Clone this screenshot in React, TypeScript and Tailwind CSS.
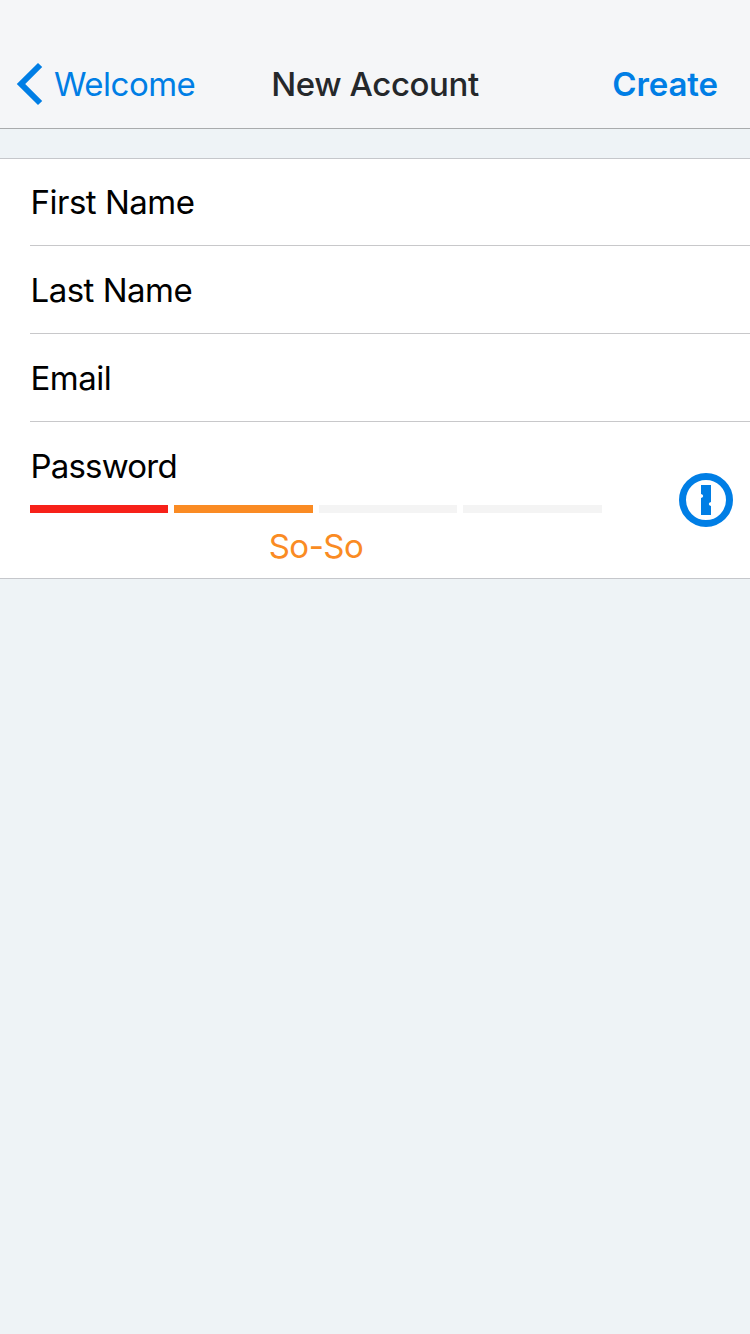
export default function App() {
  const fields = ['First Name', 'Last Name', 'Email'];
  return (
    <div className="h-[1334px] w-[750px] overflow-hidden bg-[#eef3f6] font-['Inter',sans-serif] text-[33px] leading-[44px] tracking-[-0.5px] text-black">
      <header className="grid h-[129px] grid-cols-[1fr_auto_1fr] items-end border-b border-[#a9abad] bg-[#f5f6f8] pb-[22px]">
        <div className="flex items-center pl-4 text-[#007ee5]">
          <svg className="h-[42px] w-[27px]" viewBox="0 0 27 42" fill="currentColor"><path d="M.8 21 22 0l4.2 4.1L9.2 21l17 16.9L22 42z" /></svg>
          <span className="ml-[11px]">Welcome</span>
        </div>
        <h1 className="font-medium tracking-[-0.4px] text-[#25282b]">New Account</h1>
        <div className="pr-8 text-right font-semibold tracking-[-0.1px] text-[#007ee5]">Create</div>
      </header>
      <main className="mt-[29px] border-y border-[#c5c7cb] bg-white pl-[30px]">
        {fields.map((f) => (
          <div key={f} className="h-[88px] border-b border-[#c8c8ca] pl-[0.5px] pt-[22px] first:h-[87px] first:pt-[21px]">{f}</div>
        ))}
        <div className="flex h-[156px]">
          <div className="w-[572px] pt-[22px]">
            <div className="pl-[0.5px] tracking-[-0.8px]">Password</div>
            <div className="mt-[17px] grid grid-cols-[138px_139px_138px_139px] gap-1.5">
              <i className="h-2 bg-[#f72119]" /><i className="h-2 bg-[#fa8b23]" /><i className="h-2 bg-[#f4f4f4]" /><i className="h-2 bg-[#f4f4f4]" />
            </div>
            <div className="mt-[11px] text-center text-[#fa8b23]">So-So</div>
          </div>
          <svg className="ml-[77px] mt-[51px] h-[54px] w-[54px]" viewBox="0 0 54 54"><circle cx="27" cy="27" r="23.5" fill="none" stroke="#007ee5" strokeWidth="7" /><path fill="#007ee5" d="M22 12h10v17q-2.2.6-2.2 2t2.2 2v9H22V25q2.2-.6 2.2-2T22 21z" /></svg>
        </div>
      </main>
    </div>
  );
}
